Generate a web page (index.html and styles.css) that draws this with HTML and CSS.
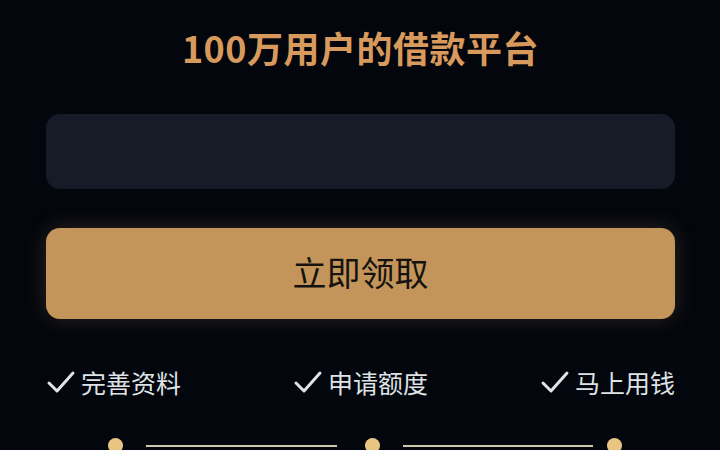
FILE: index.html
```html
<!DOCTYPE html>
<html lang="zh-CN">
<head>
<meta charset="utf-8">
<title>借款平台</title>
<link rel="stylesheet" href="styles.css">
</head>
<body>
<div class="page">
  <h1 class="title">100万用户的借款平台</h1>
  <div class="input"></div>
  <button class="cta">立即领取</button>
  <div class="features">
    <div class="feature"><svg class="check" viewBox="0 0 30 24" width="30" height="24"><path d="M3 13 L11 21 L27 3" fill="none" stroke="#dfe4e6" stroke-width="3" stroke-linecap="round" stroke-linejoin="round"/></svg><span>完善资料</span></div>
    <div class="feature"><svg class="check" viewBox="0 0 30 24" width="30" height="24"><path d="M3 13 L11 21 L27 3" fill="none" stroke="#dfe4e6" stroke-width="3" stroke-linecap="round" stroke-linejoin="round"/></svg><span>申请额度</span></div>
    <div class="feature"><svg class="check" viewBox="0 0 30 24" width="30" height="24"><path d="M3 13 L11 21 L27 3" fill="none" stroke="#dfe4e6" stroke-width="3" stroke-linecap="round" stroke-linejoin="round"/></svg><span>马上用钱</span></div>
  </div>
  <div class="steps">
    <span class="dot"></span>
    <span class="line l1"></span>
    <span class="dot"></span>
    <span class="line l2"></span>
    <span class="dot"></span>
  </div>
</div>
</body>
</html>
```
FILE: styles.css
```css
html, body {
  margin: 0;
  padding: 0;
  background: #03060d;
  overflow: hidden;
}
.page {
  box-sizing: border-box;
  width: 720px;
  height: 450px;
  padding: 25px 45px 0 46px;
  display: flex;
  flex-direction: column;
  font-family: "Noto Sans CJK SC", "Noto Sans", sans-serif;
}
.page > * {
  flex: none;
}
.title {
  margin: 0;
  font-size: 36px;
  line-height: 44px;
  font-weight: 700;
  color: #d89a5c;
  text-align: center;
  letter-spacing: 0.5px;
}
.input {
  margin-top: 45px;
  height: 75px;
  border-radius: 14px;
  background: #151c28;
}
.cta {
  box-sizing: border-box;
  margin-top: 39px;
  height: 91px;
  border: none;
  border-radius: 14px;
  background: #c4955a;
  color: #16130f;
  font-family: "Noto Sans CJK SC", sans-serif;
  font-size: 34px;
  font-weight: 400;
  padding: 0 0 5px 0;
  box-shadow: 0 0 22px rgba(196, 149, 90, 0.22);
}
.features {
  margin-top: 47px;
  display: flex;
  justify-content: space-between;
  align-items: center;
  height: 32px;
}
.feature {
  display: flex;
  align-items: center;
  gap: 5px;
  color: #dfe3e5;
  font-size: 25px;
  line-height: 32px;
}
.check {
  display: block;
}
.steps {
  margin-top: 40px;
  display: flex;
  align-items: center;
  padding-left: 62px;
  height: 15px;
}
.dot {
  width: 15px;
  height: 15px;
  border-radius: 50%;
  background: #e8c580;
  flex: none;
}
.line {
  height: 2px;
  background: #cfc6ae;
  flex: none;
}
.l1 {
  width: 191px;
  margin: 0 28px 0 23px;
}
.l2 {
  width: 190px;
  margin: 0 14px 0 23px;
}
```
